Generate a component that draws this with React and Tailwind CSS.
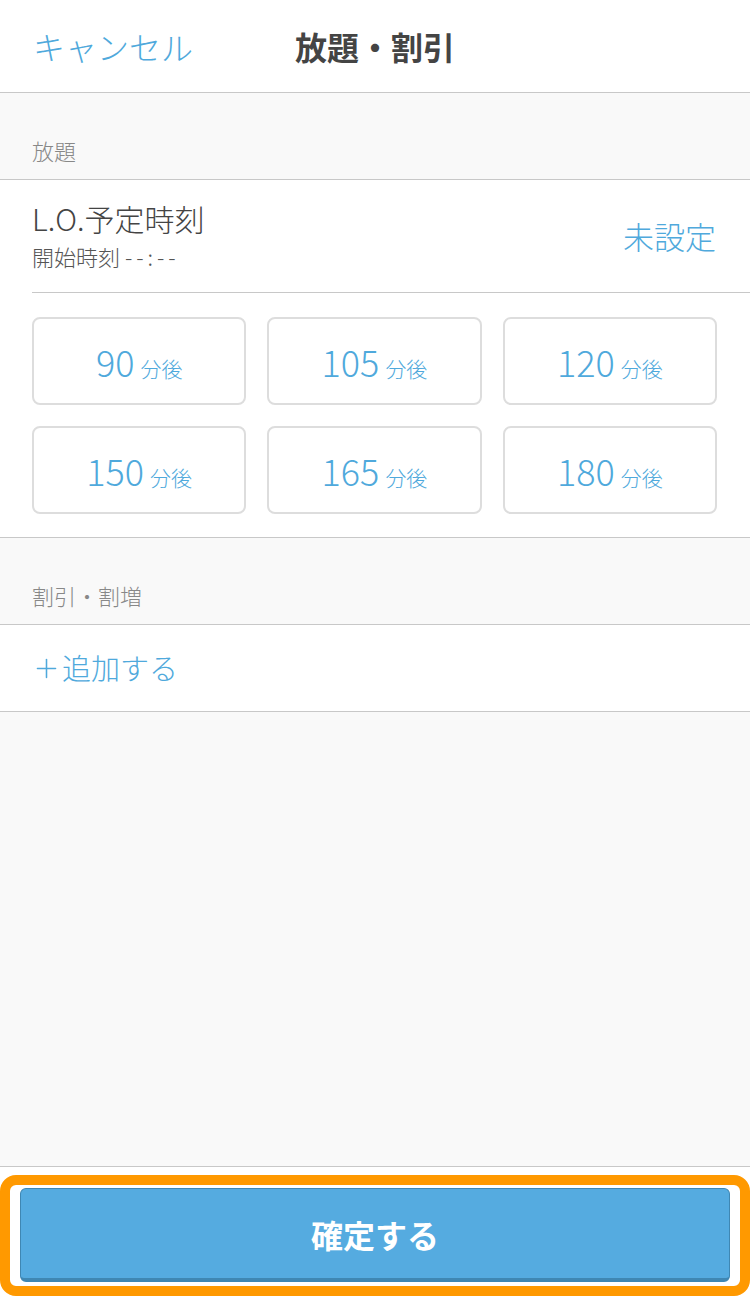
import { Plus } from "lucide-react";

const font = {
  fontFamily: '"Noto Sans CJK JP", "Noto Sans", sans-serif',
};

const presets = [90, 105, 120, 150, 165, 180];

const SectionLabel = ({ children }) => (
  <div className="h-[87px] bg-[#f9f9f9] border-b border-[#c8c8c8] flex items-end pb-[16px] px-[32px]">
    <p className="text-[22px] leading-[26px] font-light text-[#888888]">{children}</p>
  </div>
);

const App = () => {
  return (
    <div className="w-[750px] h-[1298px] flex flex-col bg-white" style={font}>
      {/* 헤더 */}
      <div className="h-[93px] border-b border-[#c8c8c8] grid grid-cols-3 items-center px-[33px]">
        <button className="text-left text-[32px] font-light text-[#4fa9dc] whitespace-nowrap">キャンセル</button>
        <h1 className="text-center text-[32px] font-bold text-[#444444] whitespace-nowrap">
          放題・割引
        </h1>
        <div />
      </div>

      <SectionLabel>放題</SectionLabel>

      {/* L.O. */}
      <div className="bg-white">
        <div className="flex justify-between pt-[20px] pb-[21px] pl-[32px] pr-[34px]">
          <div className="font-light">
            <p className="text-[30px] leading-[36px] text-[#444444]">L.O.予定時刻</p>
            <p className="mt-[5px] text-[22px] leading-[30px] text-[#555555]">
              開始時刻 <span className="tracking-[4px]">--:--</span>
            </p>
          </div>
          <button className="text-[31px] leading-[38px] font-light text-[#4fa9dc]">未設定</button>
        </div>
        <div className="ml-[32px] h-px bg-[#c8c8c8]" />
        <div className="grid grid-cols-3 gap-[21px] pt-[24px] pb-[23px] pl-[32px] pr-[33px]">
          {presets.map(min => (
            <button
              key={min}
              className="h-[88px] rounded-[8px] border-2 border-[#dddddd] flex items-baseline justify-center font-light text-[#4fa9dc]"
            >
              <span className="text-[36px] leading-[84px]">{min}</span>
              <span className="ml-[6px] text-[21px]">分後</span>
            </button>
          ))}
        </div>
      </div>

      <div className="border-t border-[#c8c8c8]" />
      <SectionLabel>割引・割増</SectionLabel>

      {/* 추가 */}
      <button className="h-[87px] border-b border-[#c8c8c8] flex items-center px-[32px] text-[29px] font-light text-[#4fa9dc]">
        <Plus className="w-[31px] h-[31px] -ml-[1px]" strokeWidth={1.2} />
        <span>追加する</span>
      </button>

      <div className="flex-1 bg-[#f9f9f9] border-b border-[#c8c8c8]" />

      {/* 확정 버튼 */}
      <div className="h-[131px] pt-[8px] pb-[2px]">
        <div className="h-[121px] rounded-[16px] border-[10px] border-[#ff9900] pt-[3px] pb-[4px] px-[10px]">
          <button className="w-full h-full rounded-[6px] bg-[#55abe0] border border-[#3f87b3] border-b-[4px] text-white text-[32px] font-bold">
            確定する
          </button>
        </div>
      </div>
    </div>
  );
};

export default App;
